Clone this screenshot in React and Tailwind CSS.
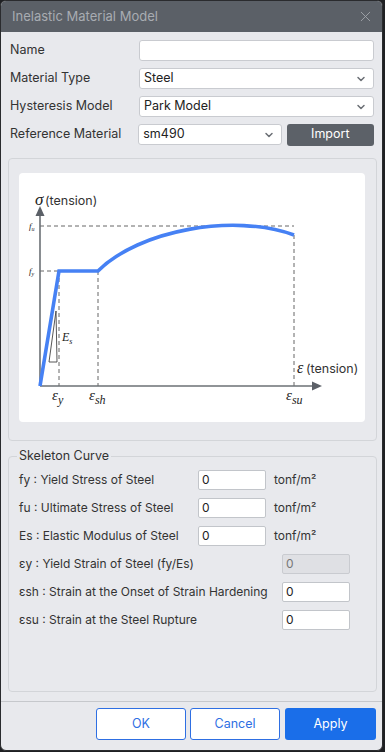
import { ChevronDown, X } from 'lucide-react';

const font = { fontFamily: 'Inter, "Noto Sans", sans-serif' };

const Row = ({ label, children }) => (
    <div className="flex items-center h-[21px]">
        <div className="w-[129px] text-[12.5px] text-[#333]">{label}</div>
        {children}
    </div>
);

const Select = ({ value, className }) => (
    <div className={`h-[21px] bg-white border border-[#c9cbd0] rounded-[3px] flex items-center justify-between pl-[4px] pr-[6px] text-[12.5px] text-[#222] ${className}`}>
        <span>{value}</span>
        <ChevronDown size={12} strokeWidth={3} className="text-[#6b6f75]" />
    </div>
);

const Field = ({ label, value, unit, wide, disabled }) => (
    <div className="flex items-center h-[20px]">
        <div className={`${wide ? 'w-[263px]' : 'w-[179px]'} text-[12px] text-[#333] whitespace-nowrap`}>{label}</div>
        <div className={`w-[68px] h-[20px] border rounded-[2px] flex items-center px-[3px] text-[12px] ${disabled ? 'bg-[#dfe0e4] border-[#c9cbd0] text-[#777]' : 'bg-white border-[#c2c5ca] text-[#222]'}`}>
            {value}
        </div>
        {unit && <div className="ml-[8px] text-[12px] text-[#333]">tonf/m²</div>}
    </div>
);

const Chart = () => (
    <svg width="346" height="249" viewBox="0 0 346 249">
        {/* dashed guides */}
        <g stroke="#666" strokeWidth="1" strokeDasharray="4 3" fill="none">
            <line x1="21" y1="53" x2="275" y2="53" />
            <line x1="21" y1="98" x2="40" y2="98" />
            <line x1="40" y1="98" x2="40" y2="213" />
            <line x1="79" y1="98" x2="79" y2="213" />
            <line x1="275" y1="62" x2="275" y2="213" />
        </g>
        {/* axes */}
        <line x1="21" y1="42" x2="21" y2="213" stroke="#6b7075" strokeWidth="1.6" />
        <polygon points="21,33 16.5,43 25.5,43" fill="#5b6067" />
        <line x1="21" y1="213" x2="294" y2="213" stroke="#6b7075" strokeWidth="1.6" />
        <polygon points="303,213 293,208.5 293,217.5" fill="#5b6067" />
        {/* curve */}
        <path d="M21,213 L40,98 L79,98 C120,57 215,40 275,62" stroke="#4681f4" strokeWidth="3.6" fill="none" strokeLinejoin="miter" />
        {/* Es triangle */}
        <polygon points="30,189 38,189 37,138" fill="none" stroke="#444" strokeWidth="0.9" />
        <g fill="#222" fontFamily='"Liberation Serif", serif' fontStyle="italic">
            <text x="16" y="32" fontSize="17">σ</text>
            <text x="10" y="56" fontSize="9">f<tspan fontSize="6" dy="2">u</tspan></text>
            <text x="10" y="101" fontSize="9">f<tspan fontSize="6" dy="2">y</tspan></text>
            <text x="43" y="168" fontSize="12">E<tspan fontSize="8" dy="3">s</tspan></text>
            <text x="33" y="227" fontSize="15">ε<tspan fontSize="12" dy="4">y</tspan></text>
            <text x="70" y="227" fontSize="15">ε<tspan fontSize="12" dy="4">sh</tspan></text>
            <text x="267" y="227" fontSize="15">ε<tspan fontSize="12" dy="4">su</tspan></text>
            <text x="278" y="200" fontSize="16">ε</text>
        </g>
        <g fill="#333" fontFamily='Inter, "Noto Sans", sans-serif' fontSize="12.5">
            <text x="26" y="32">(tension)</text>
            <text x="287" y="200">(tension)</text>
        </g>
    </svg>
);

export default function App() {
    return (
        <div className="min-h-[752px] bg-[#1f2023]" style={font}>
            <div className="w-[383px] h-[751px] bg-[#e8e9ed] rounded-[6px] border border-[#2a2b2e] overflow-hidden flex flex-col">
                {/* Title */}
                <div className="h-[31px] shrink-0 bg-[#5b6067] flex items-center justify-between pl-[11px] pr-[8px]">
                    <span className="text-[13px] text-[#a8acb2]">Inelastic Material Model</span>
                    <X size={17} strokeWidth={1.3} className="text-[#a0a4aa]" />
                </div>

                <div className="pl-[9px] pr-[8px] pt-[8px] flex flex-col gap-[7px]">
                    <Row label="Name">
                        <div className="w-[235px] h-[21px] bg-white border border-[#c9cbd0] rounded-[3px]" />
                    </Row>
                    <Row label="Material Type">
                        <Select value="Steel" className="w-[235px]" />
                    </Row>
                    <Row label="Hysteresis Model">
                        <Select value="Park Model" className="w-[235px]" />
                    </Row>
                    <Row label="Reference Material">
                        <Select value="sm490" className="w-[144px]" />
                        <button className="ml-[5px] w-[88px] h-[22px] bg-[#5c6168] text-white text-[12.5px] rounded-[3px]">Import</button>
                    </Row>
                </div>

                {/* Chart panel */}
                <div className="mt-[13px] ml-[7px] w-[369px] h-[283px] border border-[#d3d5d9] rounded-[4px] pt-[14px] pl-[10px]">
                    <div className="w-[346px] h-[249px] bg-white rounded-[4px]">
                        <Chart />
                    </div>
                </div>

                {/* Skeleton Curve */}
                <fieldset className="mt-[8px] ml-[7px] w-[369px] h-[243px] border border-[#d3d5d9] rounded-[4px]">
                    <legend className="ml-[8px] px-[2px] text-[12.5px] leading-[14px] text-[#333]">Skeleton Curve</legend>
                    <div className="pt-[7px] pl-[10px] flex flex-col gap-[8px]">
                        <Field label="fy : Yield Stress of Steel" value="0" unit />
                        <Field label="fu : Ultimate Stress of Steel" value="0" unit />
                        <Field label="Es : Elastic Modulus of Steel" value="0" unit />
                        <Field label="εy : Yield Strain of Steel (fy/Es)" value="0" wide disabled />
                        <Field label="εsh : Strain at the Onset of Strain Hardening" value="0" wide />
                        <Field label="εsu : Strain at the Steel Rupture" value="0" wide />
                    </div>
                </fieldset>

                {/* Footer */}
                <div className="mt-[9px] border-t border-[#c6c8cc] flex justify-end gap-[4px] pr-[6px] pt-[6px]">
                    <button className="w-[90px] h-[32px] bg-white border border-[#2e6fe3] text-[#2e6fe3] text-[12.5px] rounded-[3px]">OK</button>
                    <button className="w-[90px] h-[32px] bg-white border border-[#2e6fe3] text-[#2e6fe3] text-[12.5px] rounded-[3px]">Cancel</button>
                    <button className="ml-[1px] w-[91px] h-[32px] bg-[#1a6ee9] text-white text-[12.5px] rounded-[3px]">Apply</button>
                </div>
            </div>
        </div>
    );
}
